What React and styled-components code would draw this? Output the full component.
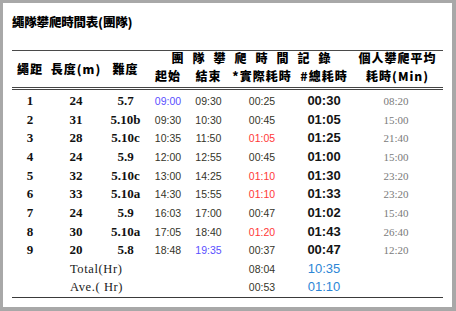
import styled, {createGlobalStyle} from "styled-components";

const GlobalStyle = createGlobalStyle`
    html, body {
        margin: 0;
        padding: 0;
        background: #a8a8a8;
    }
    body {
        width: 456px;
        height: 311px;
        overflow: hidden;
    }
`

const rows = [
    {no: "1", len: "24", grade: "5.7", start: "09:00", end: "09:30", real: "00:25", total: "00:30", avg: "08:20", startTone: "blue"},
    {no: "2", len: "31", grade: "5.10b", start: "09:30", end: "10:30", real: "00:45", total: "01:05", avg: "15:00"},
    {no: "3", len: "28", grade: "5.10c", start: "10:35", end: "11:50", real: "01:05", total: "01:25", avg: "21:40", realTone: "red"},
    {no: "4", len: "24", grade: "5.9", start: "12:00", end: "12:55", real: "00:45", total: "01:00", avg: "15:00"},
    {no: "5", len: "32", grade: "5.10c", start: "13:00", end: "14:25", real: "01:10", total: "01:30", avg: "23:20", realTone: "red"},
    {no: "6", len: "33", grade: "5.10a", start: "14:30", end: "15:55", real: "01:10", total: "01:33", avg: "23:20", realTone: "red"},
    {no: "7", len: "24", grade: "5.9", start: "16:03", end: "17:00", real: "00:47", total: "01:02", avg: "15:40"},
    {no: "8", len: "30", grade: "5.10a", start: "17:05", end: "18:40", real: "01:20", total: "01:43", avg: "26:40", realTone: "red"},
    {no: "9", len: "20", grade: "5.8", start: "18:48", end: "19:35", real: "00:37", total: "00:47", avg: "12:20", endTone: "blue"},
]

const tones = {
    blue: "#5a50ff",
    red: "#ff3838",
    normal: "#35352a",
}

export default function App() {
    return (
        <Paper>
            <GlobalStyle/>
            <Title>繩隊攀爬時間表(團隊)</Title>
            <Table>
                <colgroup>
                    <col style={{width: 36}}/>
                    <col style={{width: 56}}/>
                    <col style={{width: 43}}/>
                    <col style={{width: 42}}/>
                    <col style={{width: 39}}/>
                    <col style={{width: 68}}/>
                    <col style={{width: 56}}/>
                    <col style={{width: 91}}/>
                </colgroup>
                <thead>
                    <HeadRowTop>
                        <HeadCell rowSpan={2}>繩距</HeadCell>
                        <HeadCell rowSpan={2}>長度(m)</HeadCell>
                        <HeadCell rowSpan={2}>難度</HeadCell>
                        <SpacedHead colSpan={4}>團隊攀爬時間記錄</SpacedHead>
                        <HeadCell>個人攀爬平均</HeadCell>
                    </HeadRowTop>
                    <HeadRowBottom>
                        <HeadCell>起始</HeadCell>
                        <HeadCell>結束</HeadCell>
                        <HeadCell>*實際耗時</HeadCell>
                        <HeadCell>#總耗時</HeadCell>
                        <HeadCell>耗時(Min)</HeadCell>
                    </HeadRowBottom>
                </thead>
                <tbody>
                    <Spacer><td colSpan={8}/></Spacer>
                    {rows.map((r) => (
                        <Row key={r.no}>
                            <SerifCell>{r.no}</SerifCell>
                            <SerifCell>{r.len}</SerifCell>
                            <SerifCell>{r.grade}</SerifCell>
                            <TimeCell $tone={r.startTone}>{r.start}</TimeCell>
                            <TimeCell $tone={r.endTone}>{r.end}</TimeCell>
                            <TimeCell $tone={r.realTone}>{r.real}</TimeCell>
                            <TotalCell>{r.total}</TotalCell>
                            <AvgCell>{r.avg}</AvgCell>
                        </Row>
                    ))}
                    <Row>
                        <td/>
                        <LabelCell colSpan={2}>Total(Hr)</LabelCell>
                        <td/>
                        <td/>
                        <TimeCell>08:04</TimeCell>
                        <TotalCell $blue>10:35</TotalCell>
                        <td/>
                    </Row>
                    <Row>
                        <td/>
                        <LabelCell colSpan={2}>Ave.( Hr)</LabelCell>
                        <td/>
                        <td/>
                        <TimeCell>00:53</TimeCell>
                        <TotalCell $blue>01:10</TotalCell>
                        <td/>
                    </Row>
                </tbody>
            </Table>
        </Paper>
    )
}

const Paper = styled.div`
    margin: 3px 4px 0 3px;
    height: 304px;
    background: #ffffff;
    padding: 0 10px 0 9px;
    box-sizing: border-box;
    overflow: hidden;
`

const Title = styled.div`
    padding-top: 12px;
    height: 47px;
    box-sizing: border-box;
    font-family: "Noto Sans CJK TC", "Liberation Sans", sans-serif;
    font-weight: 900;
    font-size: 12.5px;
    line-height: 14px;
    color: #000;
    letter-spacing: -0.2px;
`

const Table = styled.table`
    width: 431px;
    table-layout: fixed;
    border-collapse: collapse;
    border-spacing: 0;
    border-top: 1.5px solid #4a4a4a;
    border-bottom: 1.5px solid #3a3a3a;

    td {
        padding: 0;
    }
`

const HeadRowTop = styled.tr`
    height: 15px;
`

const HeadRowBottom = styled.tr`
    height: 23px;
    border-bottom: 3px double #444;
`

const Spacer = styled.tr`
    height: 3px;
`

const HeadCell = styled.th`
    padding: 0;
    font-family: "Noto Sans CJK TC", "Liberation Sans", sans-serif;
    font-weight: 900;
    font-size: 12px;
    line-height: 14px;
    color: #000;
    text-align: center;
    vertical-align: middle;
    white-space: nowrap;
    letter-spacing: 1px;
`

const SpacedHead = styled(HeadCell)`
    letter-spacing: 9px;
    padding-left: 12px;
`

const Row = styled.tr`
    height: 18.7px;
`

const SerifCell = styled.td`
    font-family: "Liberation Serif", serif;
    font-weight: bold;
    font-size: 13px;
    line-height: 14px;
    color: #111;
    text-align: center;
    vertical-align: middle;
`

const TimeCell = styled.td`
    font-family: "Liberation Sans", sans-serif;
    font-size: 10.5px;
    line-height: 12px;
    color: ${(p) => tones[p.$tone || "normal"]};
    text-align: center;
    vertical-align: middle;
`

const TotalCell = styled.td`
    font-family: "Liberation Sans", sans-serif;
    font-weight: ${(p) => (p.$blue ? "normal" : "bold")};
    font-size: 13px;
    line-height: 14px;
    color: ${(p) => (p.$blue ? "#2d86d6" : "#141414")};
    text-align: center;
    vertical-align: middle;
`

const AvgCell = styled.td`
    font-family: "Liberation Serif", serif;
    font-size: 11px;
    line-height: 12px;
    color: #7a7a7a;
    text-align: center;
    vertical-align: middle;
    padding-right: 3px !important;
`

const LabelCell = styled.td`
    font-family: "Liberation Serif", serif;
    font-size: 12.5px;
    line-height: 12px;
    color: #1a1a1a;
    text-align: left;
    vertical-align: middle;
    padding-left: 22px !important;
    letter-spacing: 0.6px;
    white-space: nowrap;
`
